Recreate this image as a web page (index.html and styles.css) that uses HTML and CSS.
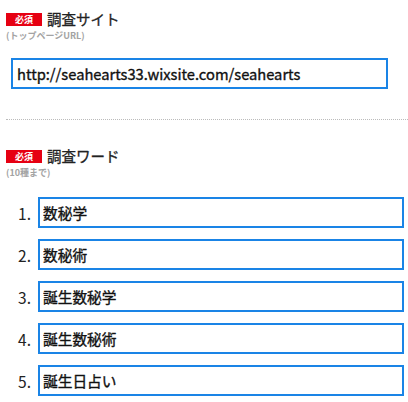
FILE: index.html
```html
<!DOCTYPE html>
<html lang="ja">
<head>
  <meta charset="UTF-8" />
  <meta name="viewport" content="width=device-width, initial-scale=1.0"/>
  <title>調査フォーム</title>
  <link rel="stylesheet" href="styles.css">
</head>
<body>
  <form id="survey-form">
    <div class="field site-field">
      <div class="field-head">
        <span class="required">必須</span>
        <label for="site">調査サイト</label>
      </div>
      <p class="note">(トップページURL)</p>
      <input type="text" id="site" class="site-input" value="http://seahearts33.wixsite.com/seahearts" />
    </div>

    <div class="field word-field">
      <div class="field-head">
        <span class="required">必須</span>
        <label>調査ワード</label>
      </div>
      <p class="note">(10種まで)</p>
      <ol class="words">
        <li><input type="text" name="word" value="数秘学" /></li>
        <li><input type="text" name="word" value="数秘術" /></li>
        <li><input type="text" name="word" value="誕生数秘学" /></li>
        <li><input type="text" name="word" value="誕生数秘術" /></li>
        <li><input type="text" name="word" value="誕生日占い" /></li>
      </ol>
    </div>
  </form>
</body>
</html>
```

FILE: styles.css
```css
* {
  margin: 0;
  padding: 0;
  box-sizing: border-box;
  font-family: 'Noto Sans CJK JP', 'Noto Sans', sans-serif;
}

body {
  background-color: white;
  color: #222;
  padding: 7px 0 0 6px;
}

.field-head {
  display: flex;
  align-items: center;
  gap: 5px;
  height: 22px;
}

.required {
  display: inline-block;
  width: 36px;
  height: 13px;
  line-height: 13px;
  margin-top: 2px;
  background-color: #e60012;
  color: white;
  font-size: 9px;
  font-weight: bold;
  text-align: center;
}

label {
  font-size: 14.5px;
  color: #222;
  -webkit-text-stroke: 0.3px #222;
}

.note {
  font-size: 9px;
  font-weight: bold;
  color: #a3a3a3;
  line-height: 12px;
  margin-top: 1px;
}

input[type="text"] {
  height: 31px;
  border: 2px solid #1a84e6;
  padding: 0 4px;
  font-size: 14.7px;
  color: #111;
  -webkit-text-stroke: 0.35px #111;
  outline: none;
}

.site-input {
  margin: 16px 0 0 5px;
  width: 377px;
}

.site-field {
  padding-bottom: 30px;
  border-bottom: 1px dotted #bbb;
}

.word-field {
  padding-top: 24px;
}

.words {
  list-style: none;
  counter-reset: word;
  margin-top: 18px;
  display: flex;
  flex-direction: column;
  gap: 11px;
}

.words li {
  counter-increment: word;
  display: flex;
  align-items: center;
  font-size: 15.5px;
}

.words li::before {
  content: counter(word) ".";
  flex: 0 0 32px;
  box-sizing: border-box;
  padding-right: 7px;
  text-align: right;
  color: #222;
}

.words input {
  flex: 0 0 366px;
  padding: 0 3px;
}
```
